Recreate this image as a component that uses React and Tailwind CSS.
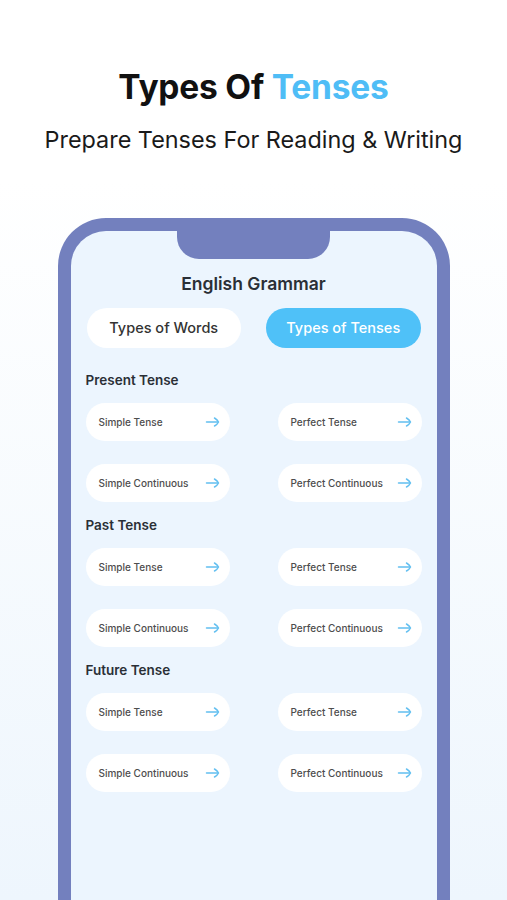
import React from "react";

const SECTIONS = [
  { title: "Present Tense" },
  { title: "Past Tense" },
  { title: "Future Tense" },
];

const ITEMS = ["Simple Tense", "Perfect Tense", "Simple Continuous", "Perfect Continuous"];

function ArrowIcon() {
  return (
    <svg width="16" height="14" viewBox="0 0 16 14" fill="none" className="shrink-0">
      <path d="M1.5 7h11" stroke="#62bff0" strokeWidth="1.5" strokeLinecap="round" />
      <path d="M9.5 3c1.8 1 3.2 2.3 4 4-0.8 1.7-2.2 3-4 4" stroke="#62bff0" strokeWidth="1.5" strokeLinecap="round" strokeLinejoin="round" />
    </svg>
  );
}

function TenseCard({ label }) {
  return (
    <div className="h-[38px] rounded-full bg-white flex items-center justify-between pl-[13px] pr-[9px]">
      <span className="text-[10px] font-medium text-[#4d4d4d]">{label}</span>
      <ArrowIcon />
    </div>
  );
}

export default function App() {
  return (
    <div
      className="h-[900px] w-full overflow-hidden bg-gradient-to-b from-white from-20% to-[#eef6fd] flex flex-col items-center"
      style={{ fontFamily: "Inter, 'Noto Sans', sans-serif" }}
    >
      <h1 className="mt-[68px] text-[33.5px] leading-[38px] font-bold tracking-[-0.2px] text-[#111]">
        Types Of <span className="text-[#4fbdf6]">Tenses</span>
      </h1>
      <p className="mt-[18px] text-[23.4px] leading-[31px] text-[#1a1a1a]">
        Prepare Tenses For Reading &amp; Writing
      </p>

      {/* phone */}
      <div className="mt-[63px] w-[392px] h-[700px] shrink-0 rounded-t-[48px] border-[13px] border-b-0 border-[#7380be] bg-[#ecf5fe] flex flex-col items-center">
        <div className="w-[153px] h-[28px] bg-[#7380be] rounded-b-[22px]" />
        <div className="mt-[15px] h-5 flex items-center text-[17.5px] font-semibold text-[#2a2f36]">
          English Grammar
        </div>
        <div className="mt-[14px] w-full px-[16px] grid grid-cols-2 gap-[25px]">
          <div className="h-[40px] rounded-full bg-white flex items-center justify-center text-[14.5px] font-medium text-[#333]">
            Types of Words
          </div>
          <div className="h-[40px] rounded-full bg-[#4fc1f8] flex items-center justify-center text-[14.5px] font-medium text-white">
            Types of Tenses
          </div>
        </div>

        <div className="mt-[9px] w-full px-[15px] flex flex-col">
          {SECTIONS.map((s) => (
            <div key={s.title} className="mt-[13px]">
              <div className="h-5 flex items-center text-[13.5px] font-semibold text-[#2a2f36]">{s.title}</div>
              <div className="mt-[13px] grid grid-cols-2 gap-x-[48px] gap-y-[23px]">
                {ITEMS.map((it) => (
                  <TenseCard key={it} label={it} />
                ))}
              </div>
            </div>
          ))}
        </div>
      </div>
    </div>
  );
}
